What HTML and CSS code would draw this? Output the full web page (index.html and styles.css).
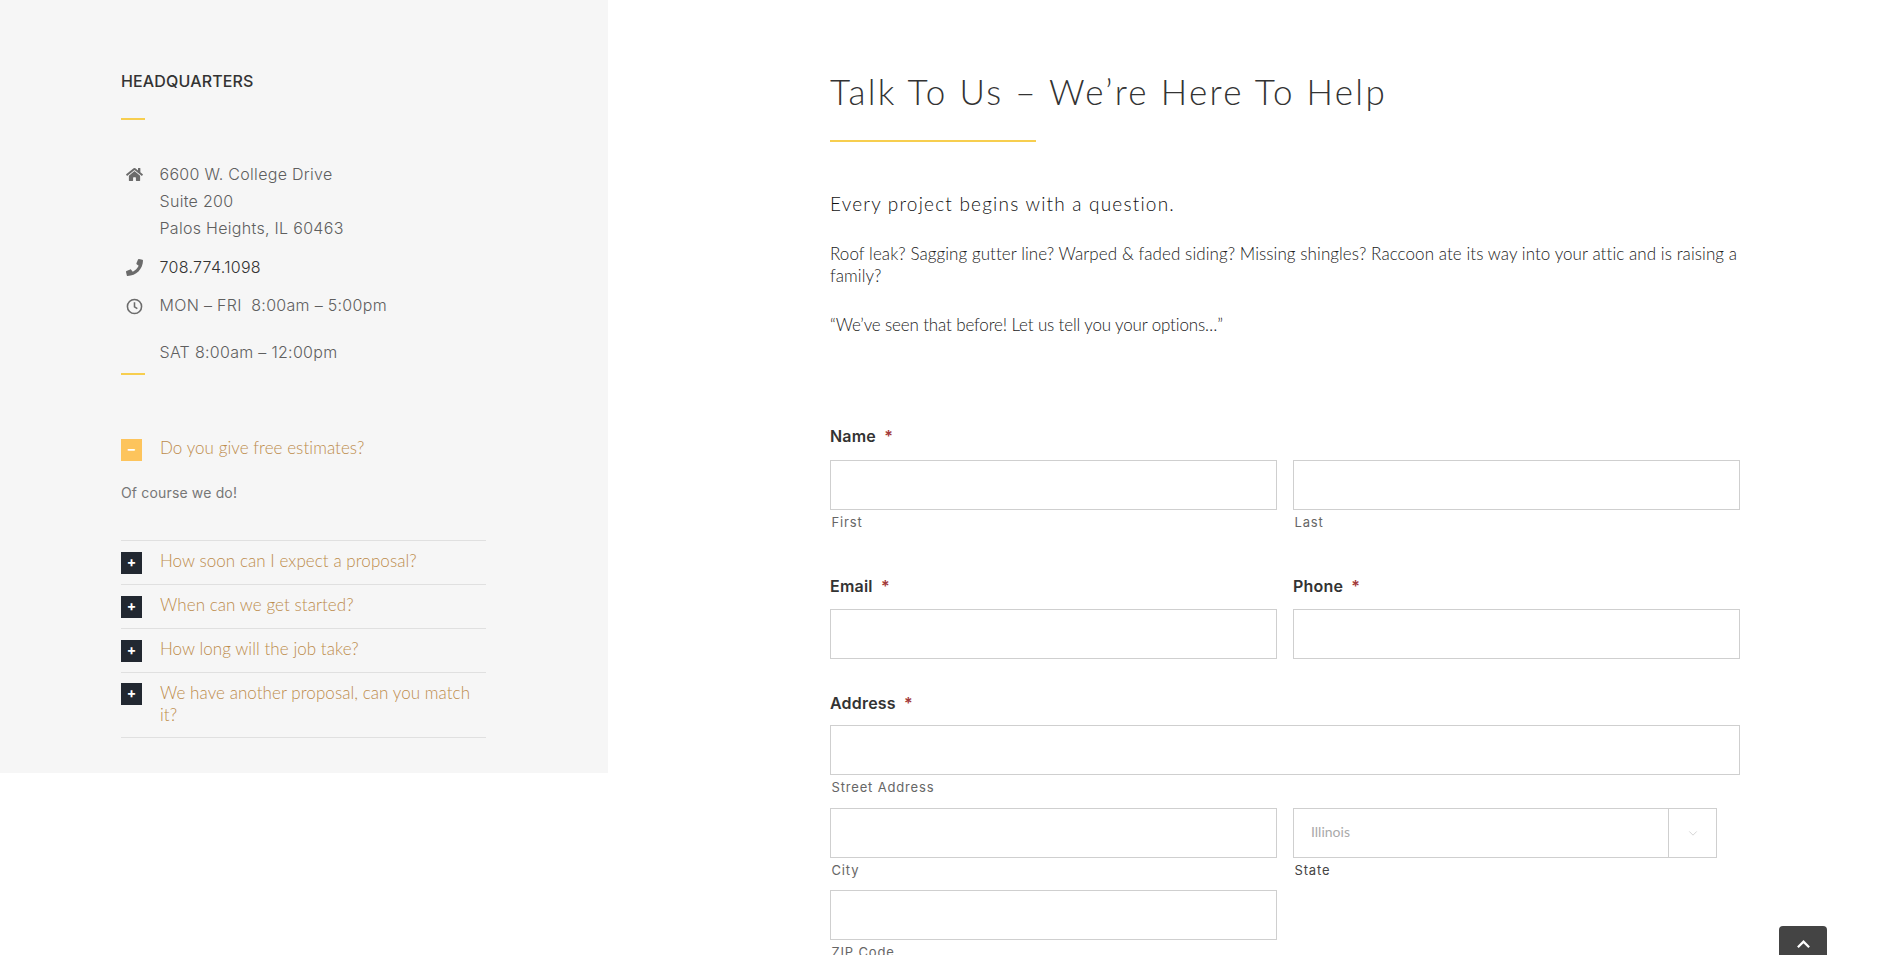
FILE: index.html
```html
<!DOCTYPE html>
<html lang="en">
<head>
<meta charset="utf-8">
<title>Contact</title>
<link rel="stylesheet" href="styles.css">
</head>
<body>
<div class="page">
  <aside class="side">
    <h4 class="side-title">HEADQUARTERS</h4>
    <div class="rule"></div>
    <ul class="contact">
      <li class="contact-addr">
        <svg class="ci ci-home" viewBox="0 0 576 512"><path d="M280.37 148.26L96 300.11V464a16 16 0 0 0 16 16l112.06-.29a16 16 0 0 0 15.92-16V368a16 16 0 0 1 16-16h64a16 16 0 0 1 16 16v95.64a16 16 0 0 0 16 16.05L464 480a16 16 0 0 0 16-16V300L295.67 148.26a12.19 12.19 0 0 0-15.3 0zM571.6 251.47L488 182.56V44.05a12 12 0 0 0-12-12h-56a12 12 0 0 0-12 12v72.61L318.47 43a48 48 0 0 0-61 0L4.34 251.47a12 12 0 0 0-1.6 16.9l25.5 31A12 12 0 0 0 45.15 301l235.22-193.74a12.19 12.19 0 0 1 15.3 0L530.9 301a12 12 0 0 0 16.9-1.6l25.5-31a12 12 0 0 0-1.7-16.93z"/></svg>
        <span>6600 W. College Drive<br>Suite 200<br>Palos Heights, IL 60463</span>
      </li>
      <li class="contact-phone">
        <svg class="ci ci-phone" viewBox="0 0 512 512"><path d="M493.4 24.6l-104-24c-11.3-2.6-22.9 3.3-27.5 13.9l-48 112c-4.2 9.8-1.4 21.3 6.9 28l60.6 49.6c-36 76.7-98.9 140.5-177.2 177.2l-49.6-60.6c-6.8-8.3-18.2-11.1-28-6.9l-112 48C3.9 366.5-2 378.1.6 389.4l24 104C27.1 504.2 36.7 512 48 512c256.1 0 464-207.5 464-464 0-11.2-7.7-20.9-18.6-23.4z"/></svg>
        <a class="phone-link">708.774.1098</a>
      </li>
      <li class="contact-hours">
        <svg class="ci ci-clock" viewBox="0 0 24 24"><circle cx="12" cy="12" r="10"/><path d="M12 6v6.500l4 2.500"/></svg>
        <span>MON – FRI&nbsp; 8:00am – 5:00pm</span>
      </li>
      <li class="contact-sat">
        <span>SAT 8:00am – 12:00pm</span>
      </li>
    </ul>
    <div class="rule rule-tight"></div>
    <div class="faq">
      <div class="faq-open">
        <span class="box box-active">–</span>
        <span class="faq-q">Do you give free estimates?</span>
      </div>
      <p class="faq-a">Of course we do!</p>
      <div class="faq-row"><span class="box">+</span><span class="faq-q">How soon can I expect a proposal?</span></div>
      <div class="faq-row"><span class="box">+</span><span class="faq-q">When can we get started?</span></div>
      <div class="faq-row"><span class="box">+</span><span class="faq-q">How long will the job take?</span></div>
      <div class="faq-row faq-last"><span class="box">+</span><span class="faq-q">We have another proposal, can you match it?</span></div>
    </div>
  </aside>
  <main class="main">
    <h1 class="title">Talk To Us – We’re Here To Help</h1>
    <div class="title-rule"></div>
    <p class="lead">Every project begins with a question.</p>
    <p class="copy">Roof leak? Sagging gutter line? Warped &amp; faded siding? Missing shingles? Raccoon ate its way into your attic and is raising a family?</p>
    <p class="copy copy-quote">“We’ve seen that before! Let us tell you your options…”</p>
    <form class="form">
      <div class="label label-name">Name <span class="req">*</span></div>
      <div class="cols cols-a">
        <div><input class="field" type="text" aria-label="First"><div class="sub">First</div></div>
        <div><input class="field" type="text" aria-label="Last"><div class="sub">Last</div></div>
      </div>
      <div class="cols cols-b">
        <div><div class="label label-email">Email <span class="req">*</span></div><input class="field" type="text" aria-label="Email"></div>
        <div><div class="label label-email">Phone <span class="req">*</span></div><input class="field" type="text" aria-label="Phone"></div>
      </div>
      <div class="label label-addr">Address <span class="req">*</span></div>
      <input class="field" type="text" aria-label="Street Address">
      <div class="sub">Street Address</div>
      <div class="cols cols-c">
        <div><input class="field" type="text" aria-label="City"><div class="sub">City</div></div>
        <div>
          <div class="select">
            <span class="select-val">Illinois</span>
            <span class="select-arrow"><svg viewBox="0 0 12 8"><path d="M1.500 1.500 6 6l4.500-4.500"/></svg></span>
          </div>
          <div class="sub sub-dark">State</div>
        </div>
      </div>
      <div class="cols cols-d">
        <div><input class="field" type="text" aria-label="ZIP Code"><div class="sub">ZIP Code</div></div>
      </div>
    </form>
  </main>
</div>
<a class="totop" aria-label="Back to top"><svg viewBox="0 0 16 10"><path d="M2 8.500 8 2.500l6 6"/></svg></a>
</body>
</html>
```
FILE: styles.css
```css
* { box-sizing: border-box; }
html, body { margin: 0; height: 955px; overflow: hidden; background: #fff; }
body { font-family: Inter, "Liberation Sans", sans-serif; color: #333; }
.page { display: flex; align-items: flex-start; height: 955px; overflow: hidden; }

.side { width: 608px; flex: none; background: #f6f6f6; padding: 71px 122px 35px 121px; }
.side-title { margin: 0; font: 500 16px/20px Inter, sans-serif; color: #333; letter-spacing: .15px; }
.rule { width: 24px; height: 2px; background: #f7ce4f; margin-top: 27px; }
.rule-tight { margin-top: 7px; }

.contact { list-style: none; margin: 41px 0 0; padding: 0 0 0 38.500px; font: 300 16px/27px Inter, sans-serif; color: #5f5f5f; letter-spacing: .3px; }
.contact li { display: flex; position: relative; }
.contact-phone { margin-top: 12px; }
.contact-hours { margin-top: 11px; }
.contact-sat { margin-top: 20px; }
.ci { position: absolute; fill: #6b6b6b; }
.ci-home { left: -33.500px; top: 6px; width: 17px; height: 15px; }
.ci-phone { left: -33.500px; top: 5px; width: 17px; height: 17px; }
.ci-clock { left: -33.500px; top: 5.500px; width: 17px; height: 17px; fill: none; stroke: #6b6b6b; stroke-width: 2.200; }
.phone-link { color: #333; }

.faq { margin-top: 62px; }
.faq-open, .faq-row { display: flex; font: 300 17px/22px Lato, sans-serif; color: #bd8c4c; }
.box { flex: none; width: 21px; height: 22px; margin: 2px 18px 0 0; background: #222831; color: #fff; font: 700 14px/20px Inter, sans-serif; text-align: center; }
.box-active { background: #fdc45c; }
.faq-q { letter-spacing: .06px; }
.faq-a { margin: 22px 0 37px; font: 400 14px/20px Inter, sans-serif; color: #777; letter-spacing: .16px; }
.faq-row { border-top: 1px solid #e0e0e0; padding: 9px 0 10px; }
.faq-last { border-bottom: 1px solid #e0e0e0; padding-bottom: 11px; }
.faq-last .box { margin-top: 1px; }

.main { width: 910px; margin-left: 222px; flex: none; padding-top: 69px; }
.title { margin: 0; font: 300 35px/44px Lato, sans-serif; color: #333; letter-spacing: 2.330px; }
.title-rule { width: 206px; height: 2px; background: #f7ce4f; margin-top: 27px; }
.lead { margin: 49px 0 0; font: 300 19px/26px Lato, sans-serif; color: #111; letter-spacing: 1.200px; }
.copy { margin: 26px 0 0; font: 300 17px/22px Lato, sans-serif; color: #222; letter-spacing: .07px; }
.copy-quote { margin-top: 27px; letter-spacing: -.15px; }

.form { margin-top: 90px; }
.label { font: 600 16px/20px Inter, sans-serif; color: #333; letter-spacing: .2px; }
.req { color: #a33a3a; margin-left: 4px; }
.cols { display: grid; grid-template-columns: 447px 447px; column-gap: 16px; }
.label-name { margin-bottom: 14px; }
.cols-b { margin-top: 46px; }
.label-email { margin-bottom: 13px; }
.label-addr { margin: 34px 0 12px; }
.cols-c { margin-top: 13px; }
.cols-d { margin-top: 12px; }
.field { display: block; width: 100%; height: 50px; margin: 0; padding: 0; border: 1px solid #cfcfcf; background: #fff; outline: 0; }
.sub { margin: 4px 0 0 1.500px; font: 400 13px/16px Inter, sans-serif; color: #666; letter-spacing: .83px; }
.sub-dark { color: #444; }
.select { display: flex; width: 424px; height: 50px; border: 1px solid #cfcfcf; }
.select-val { flex: 1; padding-left: 17px; font: 400 14px/46px Lato, sans-serif; color: #aaa; }
.select-arrow { width: 48px; border-left: 1px solid #cfcfcf; display: flex; align-items: center; justify-content: center; }
.select-arrow svg { width: 10px; height: 7px; fill: none; stroke: #ccc; stroke-width: 1; }
.totop { position: fixed; left: 1779px; top: 926px; width: 48px; height: 29px; background: #444; border-radius: 4px 4px 0 0; display: flex; justify-content: center; padding-top: 13px; }
.totop svg { width: 15px; height: 10px; fill: none; stroke: #fff; stroke-width: 2.400; }
```
